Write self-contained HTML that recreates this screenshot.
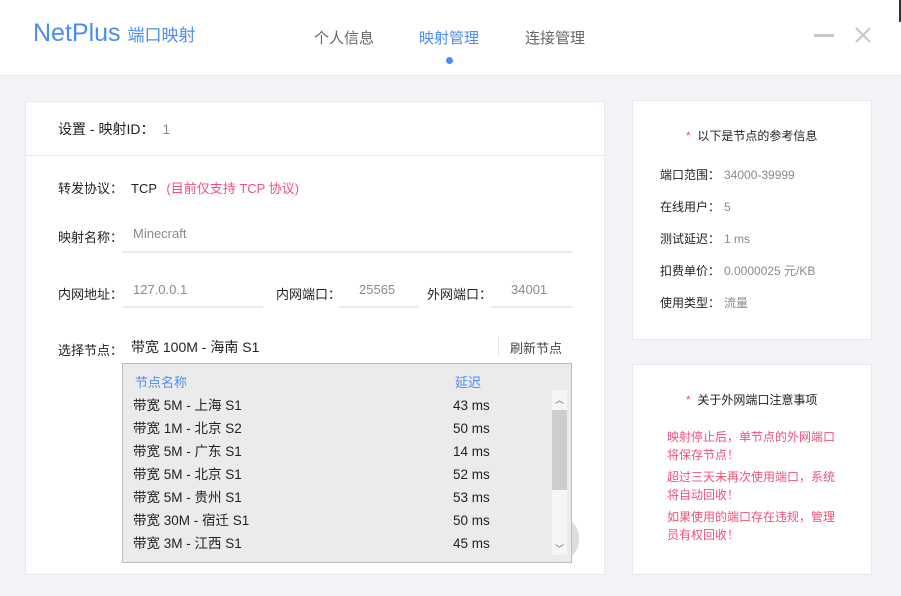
<!DOCTYPE html>
<html><head><meta charset="utf-8"><style>
*{margin:0;padding:0;box-sizing:border-box}
body{width:901px;height:596px;background:#f3f4f7;font-family:"Liberation Sans","Noto Sans CJK SC",sans-serif;position:relative;overflow:hidden;font-size:13px;color:#222}
.a{position:absolute;white-space:nowrap}
.hdr{position:absolute;left:0;top:0;width:901px;height:76px;background:#fff;border-bottom:1px solid #e6e7ea}
.card{position:absolute;background:#fff;border:1px solid #e8e9ec}
.g{color:#8a8a8a}
.ul{position:absolute;height:2px;background:#ebebeb}
.pk{color:#f2507b}
</style></head><body>
<div class="hdr"></div>
<div class="a" style="left:33px;top:19px;font-size:25px;color:#4a8cf7">NetPlus <span style="font-size:17px">端口映射</span></div>
<div class="a" style="left:314px;top:27px;font-size:15px;color:#666">个人信息</div>
<div class="a" style="left:419px;top:27px;font-size:15px;color:#4a8cf7">映射管理</div>
<div class="a" style="left:525px;top:27px;font-size:15px;color:#666">连接管理</div>
<div class="a" style="left:446px;top:57px;width:7px;height:7px;border-radius:50%;background:#4a8cf7"></div>
<div class="a" style="left:814px;top:34px;width:20px;height:3px;background:#c8c8c8"></div>
<svg class="a" style="left:854px;top:26px" width="18" height="18"><path d="M2 2L16 16M16 2L2 16" stroke="#c8c8c8" stroke-width="2.2"/></svg>
<div class="a" style="left:899px;top:0;width:2px;height:22px;background:#333"></div>

<div class="card" style="left:25px;top:101px;width:580px;height:474px"></div>
<div class="a" style="left:26px;top:155px;width:578px;height:1px;background:#e8e9ec"></div>
<div class="a" style="left:58px;top:119px;font-size:14px">设置 - 映射ID： <span class="g" style="margin-left:4px">1</span></div>

<div class="a" style="left:58px;top:178px">转发协议：</div>
<div class="a" style="left:131px;top:178px">TCP <span class="pk" style="margin-left:6px">(目前仅支持 TCP 协议)</span></div>
<div class="a" style="left:58px;top:227px">映射名称：</div>
<div class="a g" style="left:133px;top:226px">Minecraft</div>
<div class="ul" style="left:122px;top:251px;width:450px"></div>
<div class="a" style="left:58px;top:284px">内网地址：</div>
<div class="a g" style="left:133px;top:282px">127.0.0.1</div>
<div class="ul" style="left:123px;top:306px;width:140px"></div>
<div class="a" style="left:276px;top:284px">内网端口：</div>
<div class="a g" style="left:359px;top:282px">25565</div>
<div class="ul" style="left:339px;top:306px;width:80px"></div>
<div class="a" style="left:427px;top:284px">外网端口：</div>
<div class="a g" style="left:511px;top:282px">34001</div>
<div class="ul" style="left:491px;top:306px;width:81px"></div>

<div class="a" style="left:58px;top:340px">选择节点：</div>
<div class="a" style="left:131px;top:337px;font-size:14px">带宽 100M - 海南 S1</div>
<div class="a" style="left:498px;top:337px;width:1px;height:20px;background:#e6e6e6"></div>
<div class="a" style="left:510px;top:338px;color:#444">刷新节点</div>
<div class="a" style="left:560px;top:522px;width:19px;height:34px;border-radius:50%;background:#ddd"></div>
<div class="a" style="left:122px;top:363px;width:450px;height:200px;background:#ebebeb;border:1px solid #bcbcbc"></div>
<div class="a" style="left:135px;top:372px;color:#4a8cf7">节点名称</div>
<div class="a" style="left:455px;top:372px;color:#4a8cf7">延迟</div>
<div class="a" style="left:552px;top:390px;width:15px;height:165px;background:#f5f5f5"></div>
<div class="a" style="left:552px;top:410px;width:15px;height:80px;background:#cdcdcd"></div>
<div class="a" style="left:555px;top:393px;font-size:9px;color:#666">︿</div>
<div class="a" style="left:555px;top:542px;font-size:9px;color:#666">﹀</div>
<div class="a" style="left:133px;top:394px;line-height:23px;font-size:13.5px">带宽 5M - 上海 S1<br>带宽 1M - 北京 S2<br>带宽 5M - 广东 S1<br>带宽 5M - 北京 S1<br>带宽 5M - 贵州 S1<br>带宽 30M - 宿迁 S1<br>带宽 3M - 江西 S1</div>
<div class="a" style="left:453px;top:394px;line-height:23px;font-size:13.5px">43 ms<br>50 ms<br>14 ms<br>52 ms<br>53 ms<br>50 ms<br>45 ms</div>

<div class="card" style="left:632px;top:100px;width:240px;height:240px"></div>
<div class="a" style="left:686px;top:127px;font-size:12px"><span class="pk">*</span> &nbsp;以下是节点的参考信息</div>
<div class="a" style="left:660px;top:159px;font-size:12px;line-height:32px">端口范围：<br>在线用户：<br>测试延迟：<br>扣费单价：<br>使用类型：</div>
<div class="a g" style="left:724px;top:159px;font-size:12px;line-height:32px">34000-39999<br>5<br>1 ms<br>0.0000025 元/KB<br>流量</div>

<div class="card" style="left:632px;top:364px;width:240px;height:211px"></div>
<div class="a" style="left:686px;top:391px;font-size:12px"><span class="pk">*</span> &nbsp;关于外网端口注意事项</div>
<div class="a pk" style="left:667px;top:428px;font-size:12px;line-height:18px">映射停止后，单节点的外网端口<br>将保存节点！</div>
<div class="a pk" style="left:667px;top:468px;font-size:12px;line-height:18px">超过三天未再次使用端口，系统<br>将自动回收！</div>
<div class="a pk" style="left:667px;top:508px;font-size:12px;line-height:18px">如果使用的端口存在违规，管理<br>员有权回收！</div>
</body></html>
